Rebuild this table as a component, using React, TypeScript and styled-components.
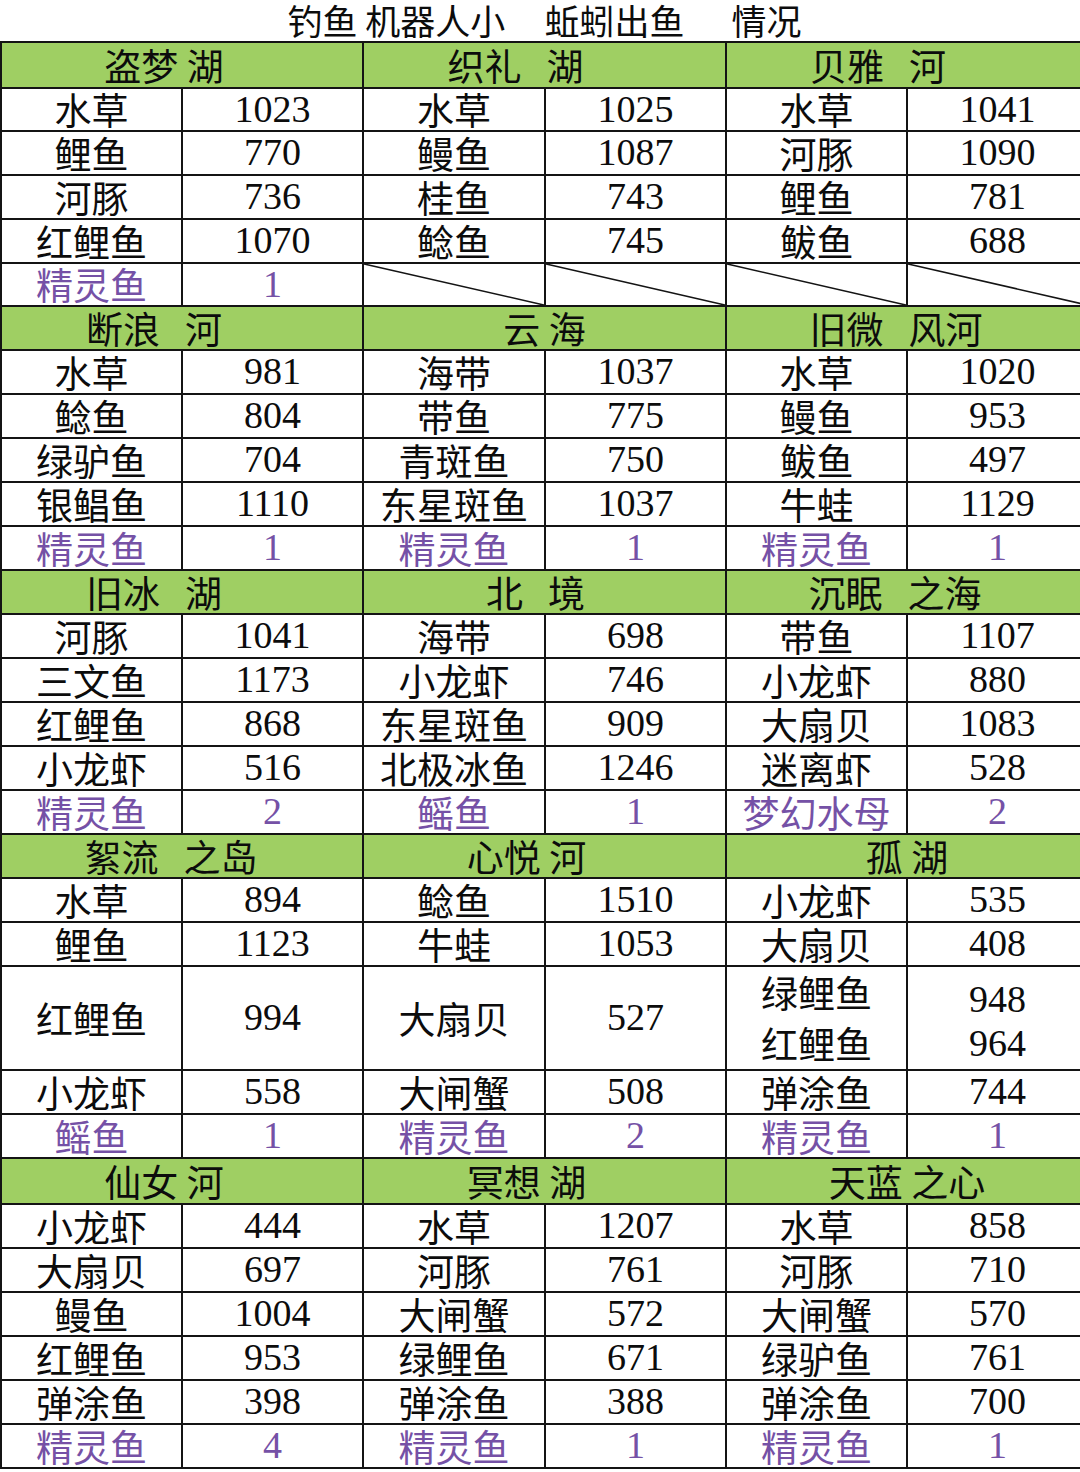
import React from "react";
import styled, { createGlobalStyle } from "styled-components";

type Entry = { name: string; value: string; rare?: boolean };
type Cell = Entry | Entry[] | null;

interface Lake {
  title: string;
  shift: number;
  rows: Cell[];
}

interface Block {
  header: number;
  heights: number[];
  lakes: Lake[];
}

const e = (name: string, value: string, rare = false): Entry => ({
  name,
  value,
  rare,
});

const blocks: Block[] = [
  {
    header: 46,
    heights: [43, 44, 44, 44, 43],
    lakes: [
      {
        title: "盗梦 湖",
        shift: -18,
        rows: [
          e("水草", "1023"),
          e("鲤鱼", "770"),
          e("河豚", "736"),
          e("红鲤鱼", "1070"),
          e("精灵鱼", "1", true),
        ],
      },
      {
        title: "织礼   湖",
        shift: -29,
        rows: [
          e("水草", "1025"),
          e("鳗鱼", "1087"),
          e("桂鱼", "743"),
          e("鲶鱼", "745"),
          null,
        ],
      },
      {
        title: "贝雅   河",
        shift: -29,
        rows: [
          e("水草", "1041"),
          e("河豚", "1090"),
          e("鲤鱼", "781"),
          e("鲅鱼", "688"),
          null,
        ],
      },
    ],
  },
  {
    header: 44,
    heights: [44, 44, 44, 44, 44],
    lakes: [
      {
        title: "断浪   河",
        shift: -28,
        rows: [
          e("水草", "981"),
          e("鲶鱼", "804"),
          e("绿驴鱼", "704"),
          e("银鲳鱼", "1110"),
          e("精灵鱼", "1", true),
        ],
      },
      {
        title: "云 海",
        shift: 0,
        rows: [
          e("海带", "1037"),
          e("带鱼", "775"),
          e("青斑鱼", "750"),
          e("东星斑鱼", "1037"),
          e("精灵鱼", "1", true),
        ],
      },
      {
        title: "旧微   风河",
        shift: -11,
        rows: [
          e("水草", "1020"),
          e("鳗鱼", "953"),
          e("鲅鱼", "497"),
          e("牛蛙", "1129"),
          e("精灵鱼", "1", true),
        ],
      },
    ],
  },
  {
    header: 44,
    heights: [44, 44, 44, 44, 44],
    lakes: [
      {
        title: "旧冰   湖",
        shift: -28,
        rows: [
          e("河豚", "1041"),
          e("三文鱼", "1173"),
          e("红鲤鱼", "868"),
          e("小龙虾", "516"),
          e("精灵鱼", "2", true),
        ],
      },
      {
        title: "北   境",
        shift: -9,
        rows: [
          e("海带", "698"),
          e("小龙虾", "746"),
          e("东星斑鱼", "909"),
          e("北极冰鱼", "1246"),
          e("鳐鱼", "1", true),
        ],
      },
      {
        title: "沉眠   之海",
        shift: -12,
        rows: [
          e("带鱼", "1107"),
          e("小龙虾", "880"),
          e("大扇贝", "1083"),
          e("迷离虾", "528"),
          e("梦幻水母", "2", true),
        ],
      },
    ],
  },
  {
    header: 44,
    heights: [44, 44, 104, 44, 44],
    lakes: [
      {
        title: "絮流   之岛",
        shift: -11,
        rows: [
          e("水草", "894"),
          e("鲤鱼", "1123"),
          e("红鲤鱼", "994"),
          e("小龙虾", "558"),
          e("鳐鱼", "1", true),
        ],
      },
      {
        title: "心悦 河",
        shift: -18,
        rows: [
          e("鲶鱼", "1510"),
          e("牛蛙", "1053"),
          e("大扇贝", "527"),
          e("大闸蟹", "508"),
          e("精灵鱼", "2", true),
        ],
      },
      {
        title: "孤 湖",
        shift: 0,
        rows: [
          e("小龙虾", "535"),
          e("大扇贝", "408"),
          [e("绿鲤鱼", "948"), e("红鲤鱼", "964")],
          e("弹涂鱼", "744"),
          e("精灵鱼", "1", true),
        ],
      },
    ],
  },
  {
    header: 46,
    heights: [44, 44, 44, 44, 44, 44],
    lakes: [
      {
        title: "仙女 河",
        shift: -18,
        rows: [
          e("小龙虾", "444"),
          e("大扇贝", "697"),
          e("鳗鱼", "1004"),
          e("红鲤鱼", "953"),
          e("弹涂鱼", "398"),
          e("精灵鱼", "4", true),
        ],
      },
      {
        title: "冥想 湖",
        shift: -18,
        rows: [
          e("水草", "1207"),
          e("河豚", "761"),
          e("大闸蟹", "572"),
          e("绿鲤鱼", "671"),
          e("弹涂鱼", "388"),
          e("精灵鱼", "1", true),
        ],
      },
      {
        title: "天蓝 之心",
        shift: 0,
        rows: [
          e("水草", "858"),
          e("河豚", "710"),
          e("大闸蟹", "570"),
          e("绿驴鱼", "761"),
          e("弹涂鱼", "700"),
          e("精灵鱼", "1", true),
        ],
      },
    ],
  },
];

const GlobalStyle = createGlobalStyle`
  html, body {
    margin: 0;
    padding: 0;
    background: #ffffff;
  }
  #root {
    width: 1080px;
    overflow: hidden;
  }
`;

const CJK = `"Noto Sans CJK SC", "Noto Sans", sans-serif`;
const NUM = `"Liberation Serif", "Times New Roman", serif`;
const LINE = "2px solid #141414";
const PURPLE = "#7551a6";
const INK = "#0c0c0c";

const Page = styled.div`
  width: 1089px;
  background: #ffffff;
  color: ${INK};
`;

const Title = styled.div`
  height: 41px;
  width: 1080px;
  display: flex;
  align-items: center;
  justify-content: center;
  padding-left: 9px;
  box-sizing: border-box;
  font-family: ${CJK};
  font-size: 35px;
  line-height: 1.15;
  white-space: pre;
`;

const Table = styled.div`
  border-top: ${LINE};
  border-left: ${LINE};
`;

const BlockGrid = styled.div<{ $rows: string }>`
  display: grid;
  grid-template-columns: 181px 181px 182px 181px 181px 181px;
  grid-template-rows: ${p => p.$rows};
`;

const HeaderCell = styled.div<{ $shift: number }>`
  grid-column: span 2;
  display: flex;
  align-items: center;
  justify-content: center;
  box-sizing: border-box;
  padding-right: ${p => -p.$shift * 2}px;
  background: #9fcf63;
  border-right: ${LINE};
  border-bottom: ${LINE};
  font-family: ${CJK};
  font-size: 37px;
  line-height: 1.1;
  white-space: pre;
`;

const BaseCell = styled.div`
  position: relative;
  display: flex;
  flex-direction: column;
  align-items: center;
  justify-content: center;
  box-sizing: border-box;
  border-right: ${LINE};
  border-bottom: ${LINE};
  white-space: nowrap;
`;

const NameCell = styled(BaseCell)<{ $rare?: boolean }>`
  font-family: ${CJK};
  font-size: 37px;
  line-height: 1.1;
  color: ${p => (p.$rare ? PURPLE : INK)};
`;

const ValueCell = styled(BaseCell)<{ $rare?: boolean }>`
  font-family: ${NUM};
  font-size: 38px;
  line-height: 1.1;
  color: ${p => (p.$rare ? PURPLE : INK)};
`;

const StackLine = styled.span<{ $h: number }>`
  display: block;
  height: ${p => p.$h}px;
  line-height: ${p => p.$h}px;
`;

const ValueStack = styled.div`
  padding-top: 6px;
`;

const Slash = styled.svg`
  position: absolute;
  inset: 0;
  width: 100%;
  height: 100%;
`;

const EmptyCell = () => (
  <BaseCell>
    <Slash viewBox="0 0 100 100" preserveAspectRatio="none">
      <line
        x1="0"
        y1="0"
        x2="100"
        y2="100"
        stroke="#141414"
        strokeWidth="1.6"
        vectorEffect="non-scaling-stroke"
      />
    </Slash>
  </BaseCell>
);

const renderCells = (cell: Cell, key: string) => {
  if (cell === null) {
    return [<EmptyCell key={key + "a"} />, <EmptyCell key={key + "b"} />];
  }
  if (Array.isArray(cell)) {
    return [
      <NameCell key={key + "a"}>
        {cell.map(c => (
          <StackLine key={c.name} $h={51}>
            {c.name}
          </StackLine>
        ))}
      </NameCell>,
      <ValueCell key={key + "b"}>
        <ValueStack>
          {cell.map(c => (
            <StackLine key={c.value} $h={44}>
              {c.value}
            </StackLine>
          ))}
        </ValueStack>
      </ValueCell>,
    ];
  }
  return [
    <NameCell key={key + "a"} $rare={cell.rare}>
      {cell.name}
    </NameCell>,
    <ValueCell key={key + "b"} $rare={cell.rare}>
      {cell.value}
    </ValueCell>,
  ];
};

const App = () => {
  return (
    <>
      <GlobalStyle />
      <Page>
        <Title>{"钓鱼 机器人小     蚯蚓出鱼      情况"}</Title>
        <Table>
          {blocks.map((block, bi) => (
            <BlockGrid
              key={bi}
              $rows={[block.header, ...block.heights]
                .map(h => h + "px")
                .join(" ")}
            >
              {block.lakes.map(lake => (
                <HeaderCell key={lake.title} $shift={lake.shift}>
                  {lake.title}
                </HeaderCell>
              ))}
              {block.heights.map((_, ri) =>
                block.lakes.flatMap((lake, li) =>
                  renderCells(lake.rows[ri], `${bi}-${ri}-${li}`)
                )
              )}
            </BlockGrid>
          ))}
        </Table>
      </Page>
    </>
  );
};

export default App;
